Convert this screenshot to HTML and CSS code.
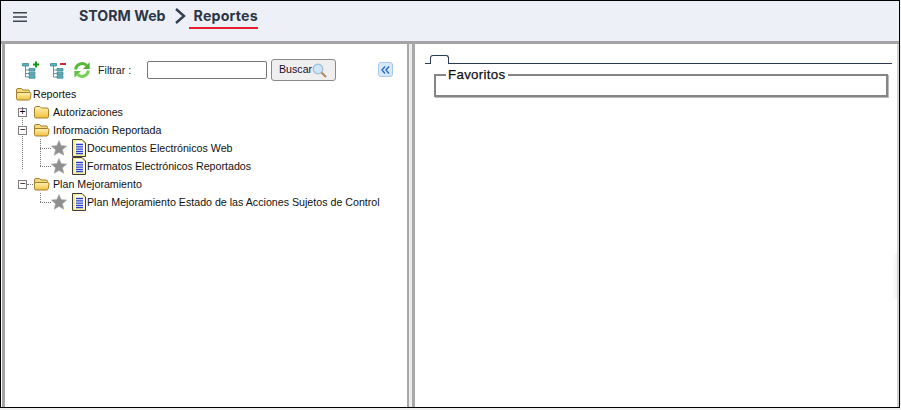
FILE: index.html
```html
<!DOCTYPE html>
<html lang="es">
<head>
<meta charset="utf-8">
<title>STORM Web - Reportes</title>
<link rel="stylesheet" href="styles.css">
</head>
<body>
<svg class="defs" width="0" height="0">
  <defs>
    <linearGradient id="fold" x1="0" y1="0" x2="0" y2="1"><stop offset="0" stop-color="#fff3b0"/><stop offset="1" stop-color="#f0c040"/></linearGradient>
    <symbol id="folder-closed" viewBox="0 0 17 14">
      <path d="M1.5 3.5 Q1.5 1.5 3.5 1.5 H7 L8.5 3 H14 Q15.5 3 15.5 4.5 V11.5 Q15.5 13 14 13 H3 Q1.5 13 1.5 11.5 Z" fill="url(#fold)" stroke="#a57f2a"/>
    </symbol>
    <symbol id="folder-open" viewBox="0 0 17 14">
      <path d="M1.5 11 V3 Q1.5 1.5 3 1.5 H6.5 L8 3 H13 Q14.5 3 14.5 4.5 V5.5" fill="#f3d980" stroke="#a57f2a"/>
      <path d="M1.5 7 Q1.5 5.5 3 5.5 H14.5 Q16.2 5.5 16 7 L15.3 11.5 Q15 13 13.5 13 H3 Q1.5 13 1.5 11.5 Z" fill="url(#fold)" stroke="#a57f2a"/>
    </symbol>
    <symbol id="star" viewBox="0 0 16 16">
      <path d="M8 .5 L10.2 5.6 L15.7 6.1 L11.5 9.8 L12.8 15.3 L8 12.4 L3.2 15.3 L4.5 9.8 L.3 6.1 L5.8 5.6 Z" fill="#8f8f8f" stroke="#ababab" stroke-width=".6"/>
    </symbol>
    <symbol id="doc" viewBox="0 0 14 18">
      <path d="M.5.5 H10 L13.5 4 V17.5 H.5 Z" fill="#f7ec8e" stroke="#3c3c3c"/>
      <path d="M3 2 H9.5 L12.5 5 V15.5 H3 Z" fill="#fff"/>
      <path d="M4 5.5 H11 M4 7.8 H11 M4 10.1 H11 M4 12.4 H11 M4 14.5 H11" stroke="#2a3fd0" stroke-width="1.3"/>
    </symbol>
    <symbol id="treeicon" viewBox="0 0 16 17">
      <path d="M3.5 4 V15 M3.5 8 H7 M3.5 11.5 H7 M3.5 15 H7" stroke="#6d8fa8" fill="none"/>
      <path d="M.5 1.5 H6.5 V4 H.5 Z M7 6.5 H13 V9 H7 Z M7 10.2 H13 V12.7 H7 Z M7 13.7 H13 V16.2 H7 Z" fill="#5fb4bc" stroke="#2d7f8c" stroke-width=".7"/>
    </symbol>
  </defs>
</svg>
<div class="frame">
  <header class="topbar">
    <button class="menu" aria-label="Menú">
      <svg width="14" height="10" viewBox="0 0 14 10"><path d="M0 .8H14M0 5H14M0 9.2H14" stroke="#3f4652" stroke-width="1.5"/></svg>
    </button>
    <div class="crumbs">
      <span class="crumb">STORM Web</span>
      <svg class="chev" width="12" height="16" viewBox="0 0 12 16"><path d="M2 1 L10 8 L2 15" fill="none" stroke="#333d4f" stroke-width="2.4"/></svg>
      <span class="crumb current">Reportes</span>
    </div>
  </header>
  <main class="workspace">
    <section class="left">
      <div class="toolbar">
        <div class="tools">
          <span class="tool">
            <svg width="18" height="18" viewBox="0 0 18 18"><use href="#treeicon" width="16" height="17" y="1"/><path d="M11 3.5H17M14 .5V6.5" stroke="#0f9a10" stroke-width="2"/></svg>
          </span>
          <span class="tool">
            <svg width="18" height="18" viewBox="0 0 18 18"><use href="#treeicon" width="16" height="17" y="1"/><path d="M10 3H16" stroke="#c8283c" stroke-width="2"/></svg>
          </span>
          <span class="tool refresh">
            <svg width="18" height="18" viewBox="0 0 18 18"><path d="M2.6 8.5 A6.5 6.5 0 0 1 13.4 4.3" fill="none" stroke="#58b83a" stroke-width="3"/><path d="M16.6 1.2 V8 H10 Z" fill="#4ead32"/><path d="M15.4 9.5 A6.5 6.5 0 0 1 4.6 13.7" fill="none" stroke="#74cf52" stroke-width="3"/><path d="M1.4 16.8 V10 H8 Z" fill="#64c044"/></svg>
          </span>
        </div>
        <label class="flabel" for="f">Filtrar :</label>
        <input id="f" class="finput" type="text">
        <button class="search">Buscar<svg width="15" height="15" viewBox="0 0 15 15"><circle cx="6" cy="6" r="4.8" fill="#cfe4f7" stroke="#9bbad6" stroke-width="1.2"/><path d="M9.5 9.5 L14 14" stroke="#b98a5a" stroke-width="2.2"/></svg></button>
        <button class="collapse" aria-label="Contraer"><svg width="9" height="8" viewBox="0 0 9 8"><path d="M4 .5 L1 4 L4 7.5 M8 .5 L5 4 L8 7.5" fill="none" stroke="#2a6cc0" stroke-width="1.4"/></svg></button>
      </div>
      <div class="tree">
        <div class="row root"><svg class="fold" width="17" height="14"><use href="#folder-open"/></svg><span class="rootlabel">Reportes</span></div>
        <div class="row lvl1">
          <span class="box">+</span><svg class="fold" width="17" height="14"><use href="#folder-closed"/></svg><span class="label1">Autorizaciones</span>
        </div>
        <div class="row lvl1">
          <span class="box">−</span><svg class="fold" width="17" height="14"><use href="#folder-open"/></svg><span class="label1">Información Reportada</span>
        </div>
        <div class="row lvl2 first">
          <svg class="star" width="16" height="16"><use href="#star"/></svg><svg class="doc" width="14" height="18"><use href="#doc"/></svg><span>Documentos Electrónicos Web</span>
        </div>
        <div class="row lvl2 second">
          <svg class="star" width="16" height="16"><use href="#star"/></svg><svg class="doc" width="14" height="18"><use href="#doc"/></svg><span>Formatos Electrónicos Reportados</span>
        </div>
        <div class="row lvl1 joined">
          <span class="box">−</span><svg class="fold" width="17" height="14"><use href="#folder-open"/></svg><span class="label1">Plan Mejoramiento</span>
        </div>
        <div class="row lvl2 first">
          <svg class="star" width="16" height="16"><use href="#star"/></svg><svg class="doc" width="14" height="18"><use href="#doc"/></svg><span>Plan Mejoramiento Estado de las Acciones Sujetos de Control</span>
        </div>
        <span class="trunk"></span>
      </div>
    </section>
    <div class="splitter"></div>
    <section class="right">
      <div class="tabstrip">
        <span class="tabstart"></span><span class="tab"></span><span class="tabrest"></span>
      </div>
      <fieldset class="favs">
        <legend>Favoritos</legend>
      </fieldset>
      <span class="glow"></span>
    </section>
  </main>
</div>
</body>
</html>
```

FILE: styles.css
```css
* { box-sizing: border-box; }
html, body { margin: 0; padding: 0; background: #f0f0f0; }
body { height: 410px; overflow: hidden; font-family: "Liberation Sans", Arial, sans-serif; }
.defs { position: absolute; }
.frame {
  width: 900px; height: 408px;
  border: 1px solid #000;
  background: #fff;
  display: flex; flex-direction: column;
}
.topbar {
  height: 40px; flex: none;
  background: #edf1f7;
  display: flex; align-items: center;
  padding: 0 0 0 12px;
}
.menu { border: 0; background: none; padding: 0; width: 14px; height: 10px; display: flex; margin-bottom: 8px; }
.crumbs { display: flex; align-items: center; margin-left: 52px; height: 40px; padding-bottom: 11px; }
.crumb { font-family: Inter, sans-serif; font-weight: 700; font-size: 14.2px; color: #2d3646; }
.chev { margin: 0 8px 0 8px; }
.current { position: relative; letter-spacing: .2px; }
.current::after {
  content: ""; position: absolute; left: -5px; right: 0; top: 20px; height: 2px; background: #e8202e;
}
.workspace {
  flex: 1; min-height: 0;
  display: flex;
  border-top: 3px solid #a4a4a4;
}
.left {
  width: 405px; flex: none;
  margin-left: 1px;
  border-left: 3px solid #a4a4a4;
  position: relative;
  padding: 15px 0 0 17px;
}
.splitter {
  width: 8px; flex: none;
  background: #ececec;
  border-left: 2px solid #a8a8a8;
  border-right: 3px solid #a8a8a8;
}
.right {
  flex: 1; min-width: 0;
  border-right: 2px solid #d2d2d2;
  padding: 11px 5px 0 10px;
  position: relative;
}
.toolbar { display: flex; align-items: center; height: 21px; }
.tools { display: flex; align-items: center; width: 76px; }
.tool { width: 18px; height: 18px; display: flex; margin-right: 10px; align-items: center; }
.refresh { margin-left: -5px; }
.flabel { font-size: 10.67px; color: #222; width: 49px; }
.finput { width: 120px; height: 18px; border: 1px solid #767676; border-radius: 2px; background: #fff; padding: 0; }
.search {
  margin-left: 4px; width: 65px; height: 22px;
  background: #efefef; border: 1px solid #8a8a8a; border-radius: 3px;
  font: 10.67px "Liberation Sans", Arial, sans-serif; color: #1d0c2e;
  display: flex; align-items: center; padding: 0 0 2px 7px;
}
.search svg { margin-top: 3px; margin-left: 0; }
.collapse {
  margin-left: 42px; width: 15px; height: 15px; padding: 0;
  background: #d8e8f8; border: 1px solid #a6c8ea; border-radius: 3px;
  display: flex; align-items: center; justify-content: center;
}
.tree { position: relative; margin: 5px 0 0 -5px; font-size: 10.67px; color: #111; }
.row { height: 18px; display: flex; align-items: center; position: relative; white-space: nowrap; }
.root { margin-left: -2px; }
.rootlabel { margin-left: 1px; }
.box {
  width: 9px; height: 9px; margin-left: 1px; margin-right: 6px; flex: none;
  border: 1px solid #7d7d7d; background: #fff;
  font: 10px/7px "Liberation Mono", monospace; text-align: center; color: #000;
  position: relative; z-index: 1;
}
.label1 { margin-left: 3px; }
.lvl2 { padding-left: 34px; }
.star { margin-right: 5px; position: relative; z-index: 1; }
.doc { margin-right: 1px; }
.lvl2::before {
  content: ""; position: absolute; left: 23px; width: 11px; top: 9px;
  border-top: 1px dotted #777;
}
.lvl2::after {
  content: ""; position: absolute; left: 23px; height: 9px; top: 0;
  border-left: 1px dotted #777;
}
.second::after { height: 18px; top: -9px; }
.joined::before {
  content: ""; position: absolute; left: 10px; width: 6px; top: 9px;
  border-top: 1px dotted #777;
}
.trunk {
  position: absolute; left: 5px; top: 22px; height: 62px;
  border-left: 1px dotted #777;
}
.tabstrip { display: flex; height: 9px; align-items: flex-end; }
.tabstart { width: 5px; border-bottom: 1px solid #2b3a55; }
.tab { width: 19px; height: 9px; border: 1px solid #2b3a55; border-bottom: 0; border-radius: 3px 3px 0 0; }
.tabrest { flex: 1; border-bottom: 1px solid #2b3a55; }
.favs {
  margin: 3px 4px 0 9px; padding: 0 0 0 10px; height: 30px;
  border: 2px solid #858585; box-shadow: 1px 1px 0 #bbb;
  border-radius: 0;
}
.favs legend {
  font: 13.33px "Liberation Sans", Arial, sans-serif; -webkit-text-stroke: .25px #111; color: #111; padding: 0 2px; letter-spacing: .3px;
}
.glow {
  position: absolute; right: 0; top: 210px; width: 5px; height: 45px;
  background: linear-gradient(to right, #fff, #f3f3f3); border-radius: 40% 0 0 40%;
}
```
